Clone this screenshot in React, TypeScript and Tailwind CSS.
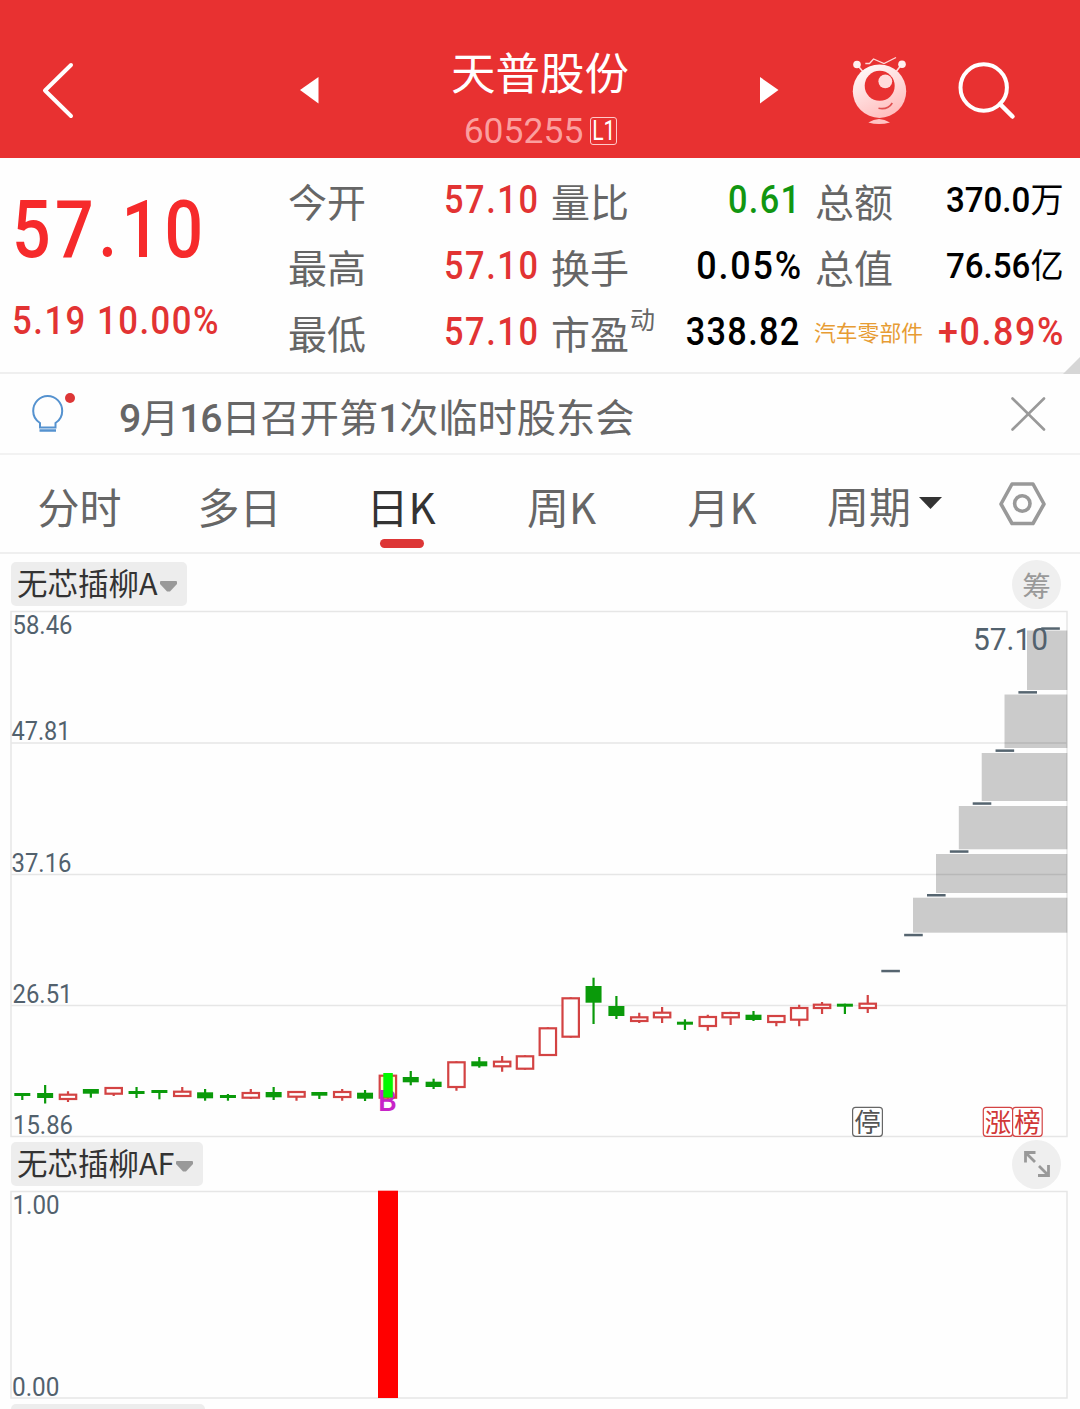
import React, { useState } from "react";

const CJK = "font-['Noto_Sans_CJK_SC',sans-serif]";
const NUM = "font-['Roboto','Noto_Sans_CJK_SC',sans-serif] font-medium";

// x position of the first candle and the distance between two candles
const START = 22.3;
const STEP = 22.85;

// [up, bodyTop, bodyBottom, high, low]
const candles: [boolean, number, number, number, number][] = [
  [false, 1093, 1096, 1093, 1100],
  [false, 1093, 1098, 1085, 1103.5],
  [true, 1093.7, 1100, 1091.3, 1102],
  [false, 1089, 1093.7, 1089, 1097.7],
  [true, 1087, 1094.7, 1087, 1096],
  [false, 1091, 1094, 1087, 1098],
  [false, 1090, 1093, 1090, 1099.3],
  [true, 1090.7, 1097, 1087, 1097],
  [false, 1092.3, 1098.3, 1089, 1100.7],
  [false, 1095, 1098, 1094, 1100.7],
  [true, 1092, 1098.7, 1089, 1099],
  [false, 1092, 1097.3, 1087, 1100],
  [true, 1091, 1097.7, 1091, 1100.7],
  [false, 1092, 1095.7, 1092, 1099],
  [true, 1091, 1098, 1089, 1100.7],
  [false, 1092.7, 1098.7, 1090, 1101],
  [true, 1074.7, 1098.7, 1074.7, 1098.7],
  [false, 1077, 1082.3, 1071, 1085.3],
  [false, 1081.7, 1087, 1078.7, 1089],
  [true, 1061.3, 1088, 1061.3, 1090.7],
  [false, 1061.3, 1066.3, 1057, 1067.7],
  [true, 1060.7, 1067.3, 1056, 1071.7],
  [true, 1055.3, 1069.7, 1055.3, 1069.7],
  [true, 1027.3, 1056, 1027.3, 1056],
  [true, 997.3, 1037.7, 997.3, 1037.7],
  [false, 986, 1002.7, 977.7, 1024],
  [false, 1006, 1016, 996, 1019],
  [true, 1016.3, 1022, 1012.7, 1023],
  [true, 1011.7, 1018.3, 1007, 1023],
  [false, 1021.7, 1024.7, 1019.3, 1030],
  [true, 1016, 1027, 1014.7, 1030.7],
  [true, 1012, 1018.3, 1011.7, 1025],
  [false, 1014.7, 1020, 1011, 1021],
  [true, 1015, 1023, 1015, 1026.3],
  [true, 1007, 1020.7, 1004.7, 1026.3],
  [true, 1003.7, 1009, 1002, 1014],
  [false, 1003.7, 1006.7, 1003.7, 1014],
  [true, 1002.7, 1009, 995, 1013],
];

// one-price limit-up days
const limitUps = [971, 935, 895.2, 851.5, 803.5, 750.6, 692.3, 628.5];

const chips = [
  [1027, 630.5, 690],
  [1004.5, 694.5, 748],
  [981.7, 753, 801],
  [958.8, 806, 849.3],
  [936, 854, 893],
  [913, 897.7, 932.7],
];

const axis: [string, number, number, number][] = [
  ["58.46", 12.5, 634, 60],
  ["47.81", 11.5, 740, 59],
  ["37.16", 11.5, 872, 60],
  ["26.51", 12.5, 1003, 60],
  ["15.86", 13, 1134, 60],
];

const Header = () => (
  <header className="flex h-[158px] items-end bg-[#e83131]">
    <div className="flex h-[136px] w-full items-center">
      <svg width="400" height="136" viewBox="0 22 400 136">
        <path d="M71 65L45 90.5L71 116" fill="none" stroke="#fff" strokeWidth="4" strokeLinecap="round" strokeLinejoin="round" />
        <path d="M300 90L318.5 77V103.500Z" fill="#fff" />
      </svg>
      <div className={`flex h-full w-[280px] flex-col items-center text-white ${CJK}`}>
        <div className="mt-[18px] h-[62px] text-[44.5px] leading-[62px]">天普股份</div>
        <div className="ml-px mt-[9px] flex h-[40px] items-center gap-[7px]">
          <span className="font-['Roboto',sans-serif] text-[35.500px] leading-[40px] text-[#fb9f9f]">605255</span>
          <span className="flex h-[28px] w-[27px] items-center justify-center rounded-[3px] border border-[#ffc9c9] font-['Roboto',sans-serif] text-[27px] leading-none">
            <span className="scale-x-[0.78]">L1</span>
          </span>
        </div>
      </div>
      <svg width="400" height="136" viewBox="680 22 400 136">
        <defs>
          <linearGradient id="mascot" x1="0" y1="0" x2="0.5" y2="1">
            <stop offset="0" stopColor="#fff" />
            <stop offset="1" stopColor="#ffc0c0" />
          </linearGradient>
        </defs>
        <path d="M778.500 90L760 77V103.500Z" fill="#fff" />
        <g fill="none" stroke="#ffd9d9" strokeWidth="1.600">
          <path d="M857 64.500L864 73M902 64L895 73" />
          <path d="M865.300 63.500H869.500L873.500 59L884 63.500L896 57.500" strokeWidth="1.300" />
        </g>
        <circle cx="857" cy="64.500" r="3.800" fill="#fff0f0" />
        <circle cx="902" cy="64.300" r="3.800" fill="#fff0f0" />
        <circle cx="879.500" cy="91.200" r="26.700" fill="url(#mascot)" />
        <circle cx="879.700" cy="85.800" r="15" fill="#e83131" />
        <circle cx="885.300" cy="81.300" r="6.900" fill="#ffdcdc" />
        <path d="M878.500 108.300Q888 110 892.300 103" fill="none" stroke="#e05050" strokeWidth="1.600" />
        <path d="M868.300 122.500Q879 115.500 890 122.500Q879 125.500 868.300 122.500Z" fill="#ffc4c4" />
        <circle cx="983.700" cy="87.500" r="23.200" fill="none" stroke="#fff" strokeWidth="4" />
        <path d="M1000 104L1012.500 116.500" stroke="#fff" strokeWidth="4.500" strokeLinecap="round" />
      </svg>
    </div>
  </header>
);

const Cell = ({ label, children }: { label: React.ReactNode; children: React.ReactNode }) => (
  <div className="flex h-[66px] items-center justify-between whitespace-nowrap">
    <span className={`relative text-[39px] leading-[66px] text-[#666] ${CJK}`}>{label}</span>
    {children}
  </div>
);

const Value = ({ className, children }: { className: string; children: React.ReactNode }) => (
  <span className={`inline-block origin-right text-[39px] leading-[66px] ${NUM} ${className}`}>{children}</span>
);

const Quote = () => (
  <section className="relative flex h-[216px] border-b-2 border-[#efefef] pt-[9px]">
    <div className="w-[288px] pl-[12px] text-[#f62a2b]">
      <div className={`h-[127px] origin-left scale-x-[0.850] text-[80px] leading-[127px] tracking-[5.200px] ${NUM}`}>57.10</div>
      <div className={`h-[54px] origin-left scale-x-[0.900] whitespace-nowrap text-[38.500px] leading-[54px] tracking-[1.700px] text-[#e23333] ${NUM}`}>
        5.19 10.00%
      </div>
    </div>
    <div className="w-[251px]">
      <Cell label="今开"><Value className="scale-x-[0.880] tracking-[1.800px] text-[#e23333]">57.10</Value></Cell>
      <Cell label="最高"><Value className="scale-x-[0.880] tracking-[1.800px] text-[#e23333]">57.10</Value></Cell>
      <Cell label="最低"><Value className="scale-x-[0.880] tracking-[1.800px] text-[#e23333]">57.10</Value></Cell>
    </div>
    <div className="ml-[12px] w-[250px]">
      <Cell label="量比"><Value className="scale-x-[0.880] tracking-[1.500px] text-[#119611]">0.61</Value></Cell>
      <Cell label="换手"><Value className="-mr-[2px] scale-x-[0.920] tracking-[2px] text-black">0.05%</Value></Cell>
      <Cell
        label={<>市盈<sup className="absolute left-[79px] top-[7px] text-[25px] leading-[25px]">动</sup></>}
      >
        <Value className="scale-x-[0.880] tracking-[1.500px] text-black">338.82</Value>
      </Cell>
    </div>
    <div className="ml-[14px] w-[249px]">
      <Cell label="总额">
        <Value className="scale-x-[0.960] text-[34.500px]! text-black">370.0<span className="font-normal">万</span></Value>
      </Cell>
      <Cell label="总值">
        <Value className="scale-x-[0.960] text-[34.500px]! text-black">76.56<span className="font-normal">亿</span></Value>
      </Cell>
      <div className="flex h-[66px] items-center justify-between whitespace-nowrap">
        <span className={`-ml-px text-[21.800px] text-[#e79c34] ${CJK}`}>汽车零部件</span>
        <Value className="-ml-6 -mr-px scale-x-[0.920] tracking-[1.700px] text-[#e23333]">+0.89%</Value>
      </div>
    </div>
    <svg className="absolute bottom-[-2px] right-0" width="17" height="17">
      <path d="M17 0V17H0Z" fill="#d6d6d6" />
    </svg>
  </section>
);

const Digits = ({ children }: { children: string }) => (
  <span className="font-medium tracking-[-1.200px]">{children}</span>
);

const Notice = ({ onClose }: { onClose: () => void }) => (
  <section className="flex h-[81px] items-center border-b-2 border-[#f2f2f2]">
    <svg width="119" height="79" viewBox="0 374.500 119 79">
      <path
        d="M40 423.500C36 421 33.200 417 33.200 411.500A14.500 15 0 0 1 62.200 411.500C62.200 417 59.500 421 55.500 423.500V428H40Z"
        fill="none"
        stroke="#5592cf"
        strokeWidth="2"
      />
      <path d="M39.500 431H56" stroke="#5592cf" strokeWidth="2.500" />
      <circle cx="70" cy="398.500" r="5" fill="#dd3636" />
    </svg>
    <div className="mt-[10px] flex-1 whitespace-nowrap font-['Roboto','Noto_Sans_CJK_SC',sans-serif] text-[39.200px] leading-[60px] text-[#666]">
      <Digits>9</Digits>月<Digits>16</Digits>日召开第<Digits>1</Digits>次临时股东会
    </div>
    <button onClick={onClose} className="mr-[34px]">
      <svg width="36" height="36" viewBox="1010 396 36 36">
        <path d="M1012.500 398.500L1044 429.500M1044 398.500L1012.500 429.500" stroke="#999" strokeWidth="2.600" strokeLinecap="round" />
      </svg>
    </button>
  </section>
);

const tabs = [
  { name: "分时", width: "w-[159px]" },
  { name: "多日", width: "w-[161px]" },
  { name: "日K", width: "w-[162px]" },
  { name: "周K", width: "w-[159px]" },
  { name: "月K", width: "w-[162px]" },
];

const Tabs = () => {
  const [active, setActive] = useState("日K");

  return (
    <nav className={`flex h-[99px] border-b-2 border-[#efefef] text-[42px] leading-[102px] text-[#666] ${CJK}`}>
      {tabs.map((tab) => (
        <button
          key={tab.name}
          onClick={() => setActive(tab.name)}
          className={`relative flex h-[97px] justify-center ${tab.width} ${active === tab.name ? "text-[#333]" : ""}`}
        >
          {tab.name}
          {active === tab.name && (
            <span className="absolute bottom-[4px] left-[60px] h-[9px] w-[44px] rounded-full bg-[#dd3636]" />
          )}
        </button>
      ))}
      <button className="ml-[24px] flex h-[97px] items-center gap-[8px]">
        <span className="mt-[2px]">周期</span>
        <svg className="-mt-[1px]" width="23" height="12">
          <path d="M0 0H23L11.500 12Z" fill="#333" />
        </svg>
      </button>
      <svg className="ml-[55px] mt-[26px]" width="50" height="46" viewBox="997 481 50 46">
        <path d="M1012 484H1033L1044 504L1033 523.500H1012L1001 504Z" fill="none" stroke="#999" strokeWidth="3.600" strokeLinejoin="round" />
        <circle cx="1022.300" cy="503.500" r="7.700" fill="none" stroke="#999" strokeWidth="3.600" />
      </svg>
    </nav>
  );
};

const IndicatorChip = ({ name }: { name: string }) => (
  <button className={`flex h-[44px] items-center rounded-[5px] bg-[#ededed] pl-[6px] pr-[10px] text-[30.500px] leading-[42px] text-[#333] ${CJK}`}>
    <span className="-mt-[5px]">{name}</span>
    <svg className="ml-[2px] mt-[4px]" width="17" height="11">
      <path d="M0 1Q0 0 1 0H16Q17 0 17 1V3L10 10.500H7L0 3Z" fill="#999" />
    </svg>
  </button>
);

const PriceChart = () => (
  <svg className="block" width="1080" height="530" viewBox="0 609 1080 530">
    <g stroke="#e6e6e6" strokeWidth="1.500" fill="none">
      <rect x="11" y="611.500" width="1056" height="525" />
      <path d="M11 743H1067M11 874.500H1067M11 1005.500H1067" />
    </g>
    {chips.map(([x, top, bottom]) => (
      <rect key={x} x={x} y={top} width={1067.3 - x} height={bottom - top} fill="#000" fillOpacity="0.200" />
    ))}
    {candles.map(([up, top, bottom, high, low], i) => {
      const x = START + i * STEP;
      return up ? (
        <g key={i} stroke="#d34343" strokeWidth="2.200" fill="none">
          <path d={`M${x} ${high}V${top + 1}M${x} ${bottom - 1}V${low}`} />
          <rect x={x - 8.2} y={top + 1} width="16.400" height={bottom - top - 2} fill={i === 16 ? "#fff8c8" : "#fff"} />
        </g>
      ) : (
        <g key={i} fill="#0a9a0a">
          <rect x={x - 1.1} y={high} width="2.200" height={low - high} />
          <rect x={x - 8} y={top} width="16" height={bottom - top} />
        </g>
      );
    })}
    <text x="378" y="1111" fontSize="30" fill="#c724c7" className="font-['Roboto',sans-serif] font-medium">B</text>
    <rect x="383.300" y="1073" width="9.500" height="24.500" fill="#00f900" />
    <g className="font-['Roboto',sans-serif] font-[450]" fill="#52616d">
      {axis.map(([text, x, y, width]) => (
        <text key={text} x={x} y={y} fontSize="25.500" textLength={width} lengthAdjust="spacingAndGlyphs">{text}</text>
      ))}
      <text x="973" y="650" fontSize="31" textLength="75" lengthAdjust="spacingAndGlyphs">57.10</text>
    </g>
    {limitUps.map((y, i) => (
      <rect key={y} x={START + (38 + i) * STEP - 9.3} y={y - 1.2} width="18.600" height="2.500" fill="#566570" />
    ))}
    <g fill="#fff" strokeWidth="1.200">
      <rect x="852.600" y="1107.300" width="29.800" height="29" rx="3" stroke="#666" />
      <rect x="983.300" y="1107.300" width="29.300" height="29" rx="3" stroke="#d34343" />
      <rect x="1012.600" y="1107.300" width="29.600" height="29" rx="3" stroke="#d34343" />
    </g>
    <g fontSize="26.500" className={CJK} textAnchor="middle">
      <text x="867.500" y="1131.500" fill="#555">停</text>
      <text x="998" y="1131.500" fill="#d13838">涨</text>
      <text x="1027.500" y="1131.500" fill="#d13838">榜</text>
    </g>
  </svg>
);

const SignalChart = () => (
  <svg className="block" width="1080" height="213" viewBox="0 1189 1080 213">
    <rect x="11" y="1191.500" width="1056" height="206.500" fill="none" stroke="#e6e6e6" strokeWidth="1.500" />
    <rect x="378" y="1190.700" width="20" height="207.300" fill="#f00" />
    <g className="font-['Roboto',sans-serif] font-[450]" fill="#52616d" fontSize="25.500">
      <text x="12.500" y="1214" textLength="47" lengthAdjust="spacingAndGlyphs">1.00</text>
      <text x="12" y="1396" textLength="47.500" lengthAdjust="spacingAndGlyphs">0.00</text>
    </g>
  </svg>
);

const App = () => {
  const [showNotice, setShowNotice] = useState(true);

  return (
    <div className="h-[1409px] w-[1080px] overflow-hidden bg-[#fefefe]">
      <Header />
      <Quote />
      {showNotice && <Notice onClose={() => setShowNotice(false)} />}
      <Tabs />

      {/* Main chart */}
      <div className="flex h-[55px] items-center justify-between pl-[11px] pr-[19px] pt-[5px]">
        <IndicatorChip name="无芯插柳A" />
        <button className={`h-[49px] w-[49px] rounded-full bg-[#efefef] text-center text-[28.500px] leading-[47px] text-[#999] ${CJK}`}>筹</button>
      </div>
      <PriceChart />

      {/* Signal chart */}
      <div className="flex h-[50px] items-center justify-between pl-[11px] pr-[19px]">
        <IndicatorChip name="无芯插柳AF" />
        <button className="flex h-[49px] w-[49px] items-center justify-center rounded-full bg-[#efefef]">
          <svg width="26" height="26" fill="none" stroke="#999" strokeWidth="2.800">
            <path d="M1.500 11.500V1.500H11.500M2 2L11 11M24.500 14V24.500H14M24 24L15 15" />
          </svg>
        </button>
      </div>
      <SignalChart />
      <div className="mt-[2px] flex pl-[11px]">
        <IndicatorChip name="无芯插柳BF" />
      </div>
    </div>
  );
};

export default App;
